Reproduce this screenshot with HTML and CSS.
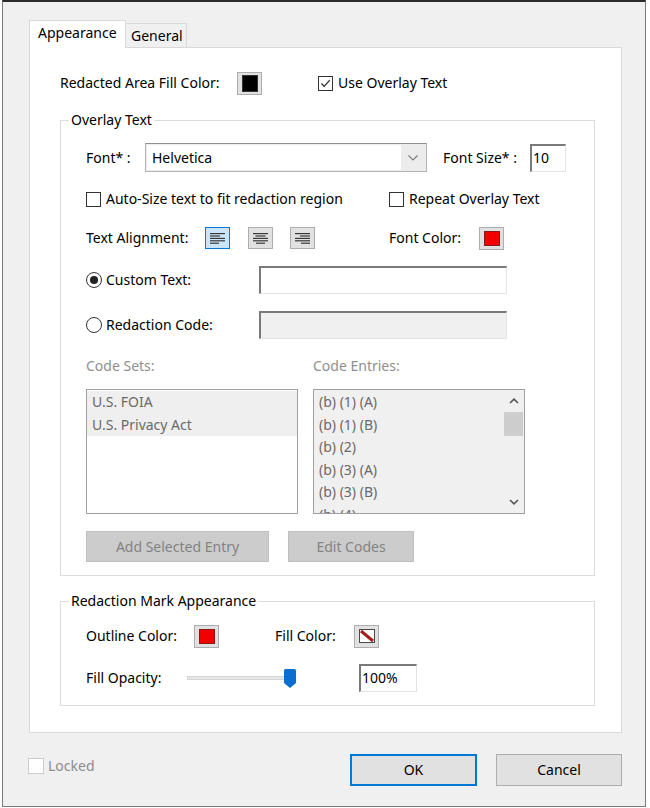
FILE: index.html
```html
<!DOCTYPE html>
<html>
<head>
<meta charset="utf-8">
<title>Redaction Tool Properties</title>
<link rel="stylesheet" href="styles.css">
</head>
<body>
<div class="window">
  <div class="tabs">
    <div class="tab active">Appearance</div>
    <div class="tab">General</div>
  </div>
  <div class="panel">
    <div class="row r-top">
      <span class="lbl w-fill">Redacted Area Fill Color:</span>
      <span class="swatch"><span class="chip black"></span></span>
      <span class="check ml-use">
        <span class="box"><svg width="13" height="13" viewBox="0 0 13 13"><polyline points="2.5,6.5 5.2,9.4 10.8,3.2" fill="none" stroke="#262626" stroke-width="1.2"/></svg></span>Use Overlay Text
      </span>
    </div>

    <fieldset class="group g-overlay">
      <legend>Overlay Text</legend>
      <div class="group-body">
        <div class="row r1">
          <span class="lbl w-font">Font*&nbsp;:</span>
          <div class="combo">
            <span class="combo-text">Helvetica</span>
            <span class="combo-btn"><svg width="10" height="6" viewBox="0 0 10 6"><polyline points="0.5,0.5 5,5 9.5,0.5" fill="none" stroke="#7a7a7a" stroke-width="1.1"/></svg></span>
          </div>
          <span class="lbl w-fsize">Font Size*&nbsp;:</span>
          <span class="input w-fsinput">10</span>
        </div>

        <div class="row r2">
          <span class="check w-auto"><span class="box"></span>Auto-Size text to fit redaction region</span>
          <span class="check"><span class="box"></span>Repeat Overlay Text</span>
        </div>

        <div class="row r3">
          <span class="lbl w-align">Text Alignment:</span>
          <span class="abtn sel">
            <svg width="15" height="11" viewBox="0 0 15 11"><g fill="#3a3a3a"><rect x="0" y="0" width="15" height="1.2"/><rect x="0" y="2.4" width="10" height="1.2"/><rect x="0" y="4.8" width="15" height="1.2"/><rect x="0" y="7.2" width="15" height="1.2"/><rect x="0" y="9.6" width="9" height="1.2"/></g></svg>
          </span>
          <span class="abtn ml-c">
            <svg width="15" height="11" viewBox="0 0 15 11"><g fill="#3a3a3a"><rect x="0" y="0" width="15" height="1.2"/><rect x="2.5" y="2.4" width="10" height="1.2"/><rect x="0" y="4.8" width="15" height="1.2"/><rect x="0" y="7.2" width="15" height="1.2"/><rect x="3" y="9.6" width="9" height="1.2"/></g></svg>
          </span>
          <span class="abtn ml-r">
            <svg width="15" height="11" viewBox="0 0 15 11"><g fill="#3a3a3a"><rect x="0" y="0" width="15" height="1.2"/><rect x="5" y="2.4" width="10" height="1.2"/><rect x="0" y="4.8" width="15" height="1.2"/><rect x="0" y="7.2" width="15" height="1.2"/><rect x="6" y="9.6" width="9" height="1.2"/></g></svg>
          </span>
          <span class="lbl w-fcolor ml-fc">Font Color:</span>
          <span class="swatch"><span class="chip red"></span></span>
        </div>

        <div class="row r4">
          <span class="radio w-radio"><span class="circle on"></span>Custom Text:</span>
          <span class="input w-text"></span>
        </div>

        <div class="row r5">
          <span class="radio w-radio"><span class="circle"></span>Redaction Code:</span>
          <span class="input w-text off"></span>
        </div>

        <div class="row r6">
          <span class="dim w-codesets">Code Sets:</span>
          <span class="dim">Code Entries:</span>
        </div>

        <div class="lists">
          <div class="list sets">
            <div class="item hl">U.S. FOIA</div>
            <div class="item hl">U.S. Privacy Act</div>
          </div>
          <div class="list entries">
            <div class="items">
              <div class="item">(b) (1) (A)</div>
              <div class="item">(b) (1) (B)</div>
              <div class="item">(b) (2)</div>
              <div class="item">(b) (3) (A)</div>
              <div class="item">(b) (3) (B)</div>
              <div class="item">(b) (4)</div>
            </div>
            <div class="scrollbar">
              <span class="sb-btn"><svg width="10" height="6" viewBox="0 0 10 6"><polyline points="1,5 5,1.2 9,5" fill="none" stroke="#555" stroke-width="1.6"/></svg></span>
              <span class="sb-thumb"></span>
              <span class="sb-space"></span>
              <span class="sb-btn"><svg width="10" height="6" viewBox="0 0 10 6"><polyline points="1,1 5,4.8 9,1" fill="none" stroke="#555" stroke-width="1.6"/></svg></span>
            </div>
          </div>
        </div>

        <div class="row r-btns">
          <span class="dbtn w-add">Add Selected Entry</span>
          <span class="dbtn w-edit">Edit Codes</span>
        </div>
      </div>
    </fieldset>

    <fieldset class="group g-mark">
      <legend>Redaction Mark Appearance</legend>
      <div class="group-body">
        <div class="row m1">
          <span class="lbl w-outline">Outline Color:</span>
          <span class="swatch"><span class="chip red"></span></span>
          <span class="lbl w-fillc ml-fill">Fill Color:</span>
          <span class="swatch"><svg width="16" height="14" viewBox="0 0 16 14"><rect x="0.5" y="0.5" width="15" height="13" fill="#fff" stroke="#4a4a4a"/><line x1="2" y1="2" x2="14" y2="12" stroke="#a51d1d" stroke-width="3"/></svg></span>
        </div>
        <div class="row m2">
          <span class="lbl w-opacity">Fill Opacity:</span>
          <div class="slider">
            <span class="track"></span>
            <span class="thumb"><svg width="12" height="19" viewBox="0 0 12 19"><path d="M1.5 0 H10.5 Q12 0 12 1.5 V14 L6 19 L0 14 V1.5 Q0 0 1.5 0 Z" fill="#0a6fd0"/></svg></span>
          </div>
          <span class="input w-pct">100%</span>
        </div>
      </div>
    </fieldset>
  </div>

  <div class="footer">
    <span class="check locked"><span class="box dis"></span>Locked</span>
    <span class="btn ok">OK</span>
    <span class="btn cancel">Cancel</span>
  </div>
</div>
</body>
</html>
```

FILE: styles.css
```css
* { box-sizing: border-box; }
html, body { margin: 0; padding: 0; }
body {
  background: #ffffff;
  font-family: "Noto Sans", "Open Sans", sans-serif;
  font-size: 14px;
  line-height: 20px;
  color: #000;
}

.window {
  margin-left: 2px;
  width: 644px;
  height: 807px;
  background: #f0f0f0;
  border: 1px solid #7a7a7a;
  border-top: 2px solid #2b2b2b;
  padding: 18px 23px 0 26px;
}

/* tabs */
.tabs { display: flex; align-items: flex-end; height: 27px; }
.tab { height: 24px; padding: 2px 0 0 5px; width: 61px; border: 1px solid #d9d9d9; border-left: none; border-bottom: none; background: #f0f0f0; }
.tab.active {
  position: relative; z-index: 1;
  width: 97px; height: 28px; margin-bottom: -1px;
  padding: 2px 8px 0 8px;
  background: #fff;
  border-left: 1px solid #d9d9d9;
}

/* panel */
.panel {
  background: #fff;
  border: 1px solid #d9d9d9;
  height: 686px;
  padding: 21px 26px 0 30px;
}

.row { display: flex; align-items: center; height: 28px; }
.lbl { flex: none; white-space: nowrap; }

.swatch {
  flex: none;
  width: 25px; height: 23px;
  background: #e1e1e1;
  border: 1px solid #adadad;
  display: flex; align-items: center; justify-content: center;
}
.chip { width: 16px; height: 15px; border: 1px solid #333; }
.chip.black { background: #000; height: 17px; }
.chip.red { background: #f20000; border-color: #8a1a1a; }

.check, .radio { display: flex; align-items: center; white-space: nowrap; flex: none; }
.box {
  width: 15px; height: 15px; border: 1px solid #333; background: #fff;
  margin-right: 5px; flex: none;
  display: flex; align-items: center; justify-content: center;
}
.box.dis { border-color: #cccccc; width: 16px; height: 16px; margin-right: 4px; }
.circle {
  width: 16px; height: 16px; border: 1px solid #333; border-radius: 50%;
  background: #fff; margin-right: 4px; flex: none;
  display: flex; align-items: center; justify-content: center;
}
.circle.on::after { content: ""; width: 8px; height: 8px; border-radius: 50%; background: #222; }

.w-fill { width: 177px; }
.ml-use { margin-left: 56px; }

/* groups */
.group {
  margin: 13px 0 0 0;
  padding: 0;
  border: 1px solid #dcdcdc;
  min-width: 0;
}
.group legend { margin-left: 8px; padding: 0 2px; line-height: 20px; }
.group-body { padding: 0 0 13px 25px; }

.r1 { margin-top: 13px; height: 29px; }
.w-font { width: 59px; }
.combo {
  width: 282px; height: 29px; flex: none;
  display: flex;
  border: 1px solid #b3b3b3;
  border-top-color: #8f8f8f;
  background: #ececec;
  padding: 1px;
}
.combo-text { flex: 1; background: #fff; padding-left: 5px; line-height: 25px; }
.combo-btn { width: 24px; display: flex; align-items: center; justify-content: center; padding-top: 1px; }
.w-fsize { width: 87px; margin-left: 16px; }
.input {
  flex: none;
  height: 28px;
  background: #fff;
  border-style: solid;
  border-width: 2px 1px 1px 2px;
  border-color: #7a7a7a #e3e3e3 #e3e3e3 #7a7a7a;
  padding-left: 1px;
  line-height: 24px;
}
.w-fsinput { width: 36px; }

.r2 { margin-top: 13px; }
.w-auto { width: 303px; }

.r3 { margin-top: 11px; }
.w-align { width: 119px; }
.abtn {
  flex: none;
  width: 25px; height: 22px;
  background: #e1e1e1;
  border: 1px solid #adadad;
  display: flex; align-items: center; justify-content: center;
}
.abtn.sel { background: #cce4f7; border-color: #0078d7; }
.ml-c { margin-left: 18px; }
.ml-r { margin-left: 17px; }
.ml-fc { margin-left: 74px; }
.w-fcolor { width: 90px; }

.r4 { margin-top: 14px; }
.r5 { margin-top: 17px; }
.w-radio { width: 173px; }
.w-text { width: 248px; }
.input.off { background: #f0f0f0; }

.r6 { margin-top: 17px; height: 20px; }
.dim { color: #8f8f8f; white-space: nowrap; }
.w-codesets { width: 227px; }

.lists { display: flex; margin-top: 13px; height: 125px; }
.list {
  width: 212px; height: 125px;
  border: 1px solid #a0a0a0;
  background: #fff;
  color: #6a6a6a;
  padding-top: 1px;
  overflow: hidden;
}
.list .item { line-height: 22.5px; height: 22.5px; padding-left: 5px; white-space: nowrap; }
.item.hl { background: #efefef; }
.list.entries { margin-left: 15px; background: #f0f0f0; display: flex; padding-top: 0; }
.entries .items { flex: 1; padding-top: 1px; overflow: hidden; }
.scrollbar { width: 19px; display: flex; flex-direction: column; flex: none; margin-right: 1px; }
.sb-btn { height: 22px; display: flex; align-items: center; justify-content: center; flex: none; }
.sb-thumb { height: 24px; background: #cdcdcd; flex: none; }
.sb-space { flex: 1; }

.r-btns { margin-top: 17px; height: 31px; }
.dbtn {
  flex: none; height: 31px;
  background: #cccccc; border: 1px solid #bfbfbf;
  color: #838383; text-align: center; line-height: 29px;
}
.w-add { width: 183px; }
.w-edit { width: 126px; margin-left: 19px; }

/* mark group */
.g-mark { margin-top: 15px; }
.m1 { margin-top: 11px; }
.w-outline { width: 108px; }
.ml-fill { margin-left: 56px; }
.w-fillc { width: 79px; }
.m2 { margin-top: 14px; }
.w-opacity { width: 101px; }
.slider { position: relative; width: 109px; height: 28px; flex: none; }
.track {
  display: block;
  margin-top: 12px;
  width: 104px; height: 4px;
  background: #e7e7e7; border: 1px solid #d6d6d6;
}
.thumb { position: absolute; left: 97px; top: 5px; width: 12px; height: 19px; }
.thumb svg { display: block; }
.w-pct { width: 58px; margin-left: 63px; }

/* footer */
.footer { display: flex; align-items: center; height: 32px; margin-top: 21px; }
.locked { color: #8d8d8d; margin-left: -1px; align-self: flex-start; margin-top: 2px; }
.btn {
  flex: none; height: 32px; text-align: center;
  background: #e1e1e1; border: 1px solid #adadad; line-height: 30px;
}
.ok { width: 127px; margin-left: auto; border: 2px solid #0078d7; line-height: 28px; }
.cancel { width: 126px; margin-left: 19px; }
```
